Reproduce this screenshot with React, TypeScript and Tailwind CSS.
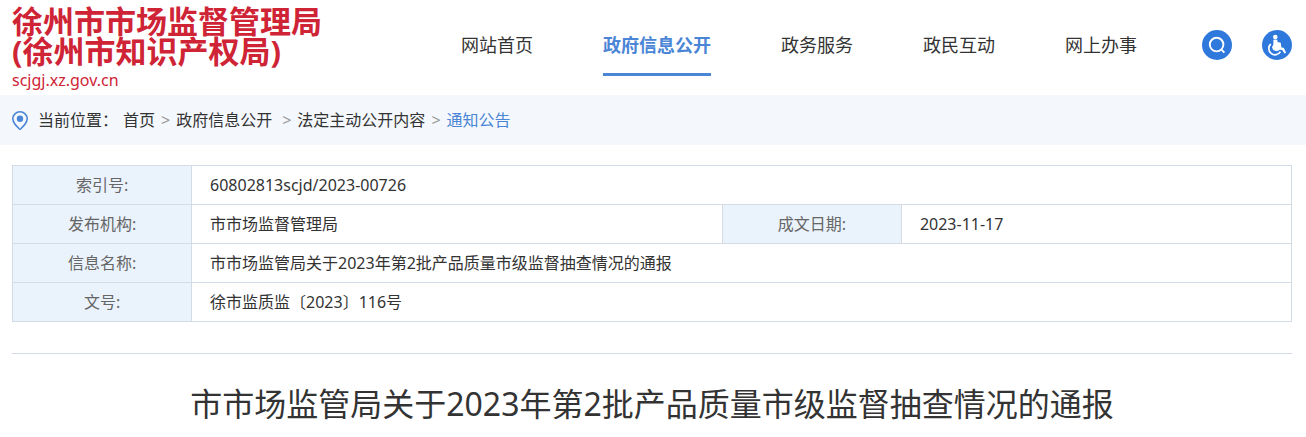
import React from 'react';

const navItems = [
  { label: '网站首页', active: false },
  { label: '政府信息公开', active: true },
  { label: '政务服务', active: false },
  { label: '政民互动', active: false },
  { label: '网上办事', active: false },
];

const labelCell = 'border border-[#d3dce6] bg-[#eaf3fc] p-0 text-center font-normal text-[#666]';
const valueCell = 'border border-[#d3dce6] px-[18px] py-0';

function SearchIcon() {
  return (
    <svg viewBox="0 0 30 30" className="size-[30px]" fill="none" aria-hidden="true">
      <circle cx="15" cy="15" r="15" fill="#2f78dc" />
      <circle cx="14.6" cy="14.6" r="6.8" stroke="#fff" strokeWidth="1.9" />
      <path d="M19.2 19.4 22.4 22.6" stroke="#fff" strokeWidth="2" />
    </svg>
  );
}

function AccessibleIcon() {
  return (
    <svg viewBox="0 0 30 30" className="size-[30px]" fill="none" aria-hidden="true">
      <circle cx="15" cy="15" r="15" fill="#2f78dc" />
      <circle cx="13.3" cy="7.1" r="2.3" fill="#fff" />
      <path
        d="M11.4 9.8h3.9l.3 2.2 3.2.7.5 4.6 2.6.8 2.2 4.6-1.6.8-2.3-3.6-2.6-.2a4.5 4.5 0 0 1-7.600-2.200c.2-1.500 1.400-2.200 1.400-3.600Z"
        fill="#fff"
      />
      <path d="M8.800 14A6.200 6.200 0 1 0 18.400 21.600" stroke="#fff" strokeWidth="1.700" />
    </svg>
  );
}

function PinIcon() {
  return (
    <svg viewBox="0 0 16 19" className="h-[19px] w-4 shrink-0" fill="none" aria-hidden="true">
      <path
        d="M8 .8C4 .8.8 4 .8 7.8c0 2.4 1.2 4.2 2.7 6.1L7.2 17.8c.5.5 1.1.5 1.6 0l3.7-3.9c1.5-1.9 2.7-3.7 2.7-6.1C15.2 4 12 .8 8 .8Z"
        stroke="#4a85d6"
        strokeWidth="1.6"
      />
      <circle cx="8" cy="7.7" r="3.2" fill="#4a85d6" />
    </svg>
  );
}

function Separator() {
  return <span className="text-[#999]">&gt;</span>;
}

export default function App() {
  return (
    <div
      lang="zh-CN"
      className="bg-white font-['Noto_Sans','Noto_Sans_CJK_SC',sans-serif] text-base text-[#333]"
    >
      <header className="flex items-start justify-between pr-3.5 pl-3">
        <a href="#" className="block pt-1.5 text-[#cf2436]">
          <span className="block text-[31px] leading-[30px] font-bold">
            徐州市市场监督管理局
            <br />
            (徐州市知识产权局)
          </span>
          <span className="block text-base leading-[29px]">scjgj.xz.gov.cn</span>
        </a>

        <div className="flex items-start gap-[65px] pt-[30px]">
          <nav className="flex gap-[70px] text-lg leading-[30px]">
            {navItems.map((item) => (
              <a
                key={item.label}
                href="#"
                className={item.active ? 'border-b-3 border-[#4a85d6] pb-[13px] font-bold text-[#4a85d6]' : ''}
              >
                {item.label}
              </a>
            ))}
          </nav>
          <div className="flex gap-[30px]">
            <button type="button" aria-label="搜索">
              <SearchIcon />
            </button>
            <button type="button" aria-label="无障碍">
              <AccessibleIcon />
            </button>
          </div>
        </div>
      </header>

      <div className="flex h-[50px] items-center bg-[#f4f8fd] px-3">
        <PinIcon />
        <span className="mr-[5px] ml-2.5">当前位置：</span>
        <div className="flex items-center gap-1.5">
          <a href="#">首页</a>
          <Separator />
          <a href="#" className="mr-1">政府信息公开</a>
          <Separator />
          <a href="#">法定主动公开内容</a>
          <Separator />
          <a href="#" className="text-[#4a85d6]">通知公告</a>
        </div>
      </div>

      <main className="pr-3.5 pl-3">
        <table className="mt-5 w-full table-fixed border-collapse">
          <colgroup>
            <col className="w-[14%]" />
            <col className="w-[41.5%]" />
            <col className="w-[14%]" />
            <col />
          </colgroup>
          <tbody>
            <tr className="h-[39px]">
              <th scope="row" className={labelCell}>索引号:</th>
              <td colSpan={3} className={valueCell}>60802813scjd/2023-00726</td>
            </tr>
            <tr className="h-[39px]">
              <th scope="row" className={labelCell}>发布机构:</th>
              <td className={valueCell}>市市场监督管理局</td>
              <th scope="row" className={labelCell}>成文日期:</th>
              <td className={valueCell}>2023-11-17</td>
            </tr>
            <tr className="h-[39px]">
              <th scope="row" className={labelCell}>信息名称:</th>
              <td colSpan={3} className={valueCell}>市市场监管局关于2023年第2批产品质量市级监督抽查情况的通报</td>
            </tr>
            <tr className="h-[39px]">
              <th scope="row" className={labelCell}>文号:</th>
              <td colSpan={3} className={valueCell}>徐市监质监〔2023〕116号</td>
            </tr>
          </tbody>
        </table>

        <h1 className="mt-[31px] border-t border-[#d3dce6] pt-[26px] pb-2 text-center text-[32px] leading-[48px]">
          市市场监管局关于2023年第2批产品质量市级监督抽查情况的通报
        </h1>
      </main>
    </div>
  );
}
